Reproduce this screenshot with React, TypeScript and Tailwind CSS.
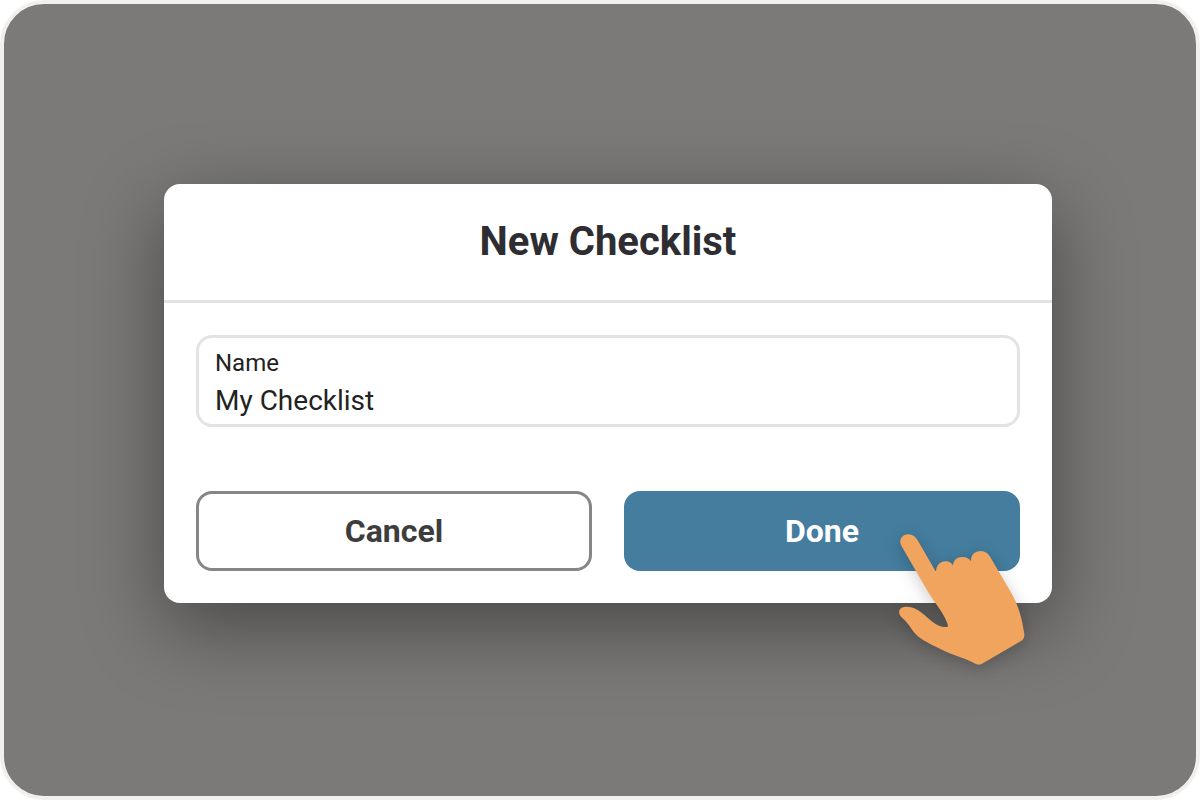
import React, { useState } from 'react';

function PointingHand() {
  return (
    <svg
      viewBox="0 0 510 480"
      className="pointer-events-none absolute right-0.5 -bottom-[77px] h-40 w-[170px] overflow-visible drop-shadow-[0_4px_8px_rgba(0,0,0,0.2)]"
      aria-hidden="true"
    >
      <path
        fill="#f0a45d"
        d="M64 77C55 60 66 43 85 43C97 43 106 49 113 61L168 156C168 137 179 124 197 124C208 124 215 129 219 136C220 121 231 111 247 111C260 111 268 116 273 124C272 105 284 93 303 93C315 93 325 100 332 113L391 214C415 255 425 290 433 342C434 352 430 359 422 364L306 431C299 435 293 434 286 431C269 421 250 415 231 408C202 398 181 386 155 374C133 363 113 352 99 333C87 316 81 307 68 295C52 282 54 263 73 261C91 258 108 265 123 277C151 299 171 324 202 321C205 318 203 312 200 305C185 270 160 243 143 214Z"
      />
    </svg>
  );
}

export default function App() {
  const [name, setName] = useState('My Checklist');

  return (
    <div className="min-h-screen bg-white font-[Roboto,sans-serif]">
      <main className="flex min-h-screen flex-col justify-center overflow-hidden rounded-[44px] border-4 border-[#f1f0ee] bg-[#7b7a78] pr-36 pb-[14px] pl-40">
        <form
          onSubmit={(e) => e.preventDefault()}
          className="relative rounded-2xl bg-white shadow-[0_24px_80px_rgba(0,0,0,0.42)]"
        >
          <h1 className="border-b-3 border-[#e3e3e3] py-[34px] text-center text-[40px] leading-12 font-bold text-[#2e2d32]">
            New Checklist
          </h1>
          <div className="p-8">
            <label className="block rounded-2xl border-3 border-[#e3e3e3] px-4 pt-2 pb-0.5 text-[#222222]">
              <span className="block text-2xl leading-[34px]">Name</span>
              <input
                type="text"
                value={name}
                onChange={(e) => setName(e.target.value)}
                className="block h-[42px] w-full bg-transparent text-[28px] outline-none"
              />
            </label>
            <div className="mt-16 grid grid-cols-2 gap-8">
              <button
                type="button"
                className="h-20 rounded-2xl border-3 border-[#868686] text-[32px] font-bold text-[#3d3d3d]"
              >
                Cancel
              </button>
              <button type="submit" className="h-20 rounded-2xl bg-[#447d9e] text-[32px] font-bold text-white">
                Done
              </button>
            </div>
          </div>
          <PointingHand />
        </form>
      </main>
    </div>
  );
}
